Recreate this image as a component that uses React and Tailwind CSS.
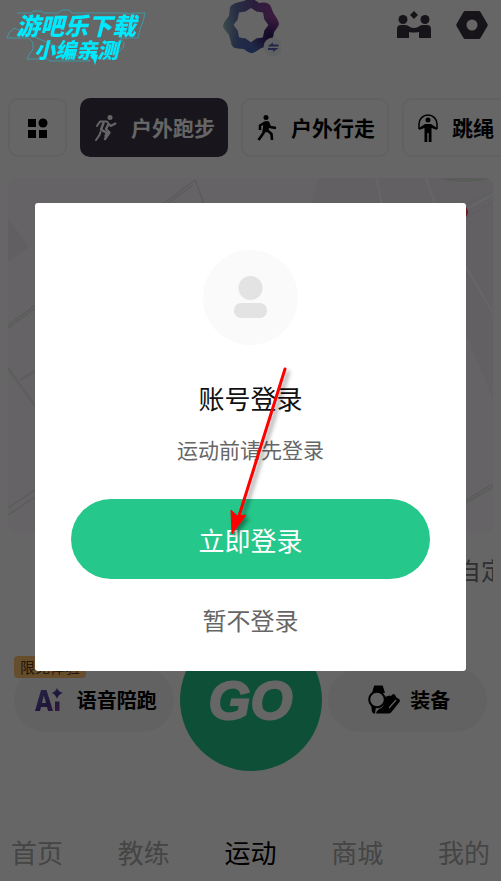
const TABS = [
  { label: '首页' },
  { label: '教练' },
  { label: '运动', active: true },
  { label: '商城' },
  { label: '我的' },
];

function BrandLogo() {
  return (
    <svg viewBox="0 0 60 60" className="size-[60px]" aria-hidden="true">
      <defs>
        <linearGradient id="ring" x1="0" y1="0.5" x2="1" y2="0.4">
          <stop offset="0" stopColor="#94bdbd" />
          <stop offset="0.25" stopColor="#6473ac" />
          <stop offset="0.6" stopColor="#6c4a98" />
          <stop offset="1" stopColor="#9c4298" />
        </linearGradient>
        <radialGradient id="ringBlue" cx="0.5" cy="1" r="0.55">
          <stop offset="0" stopColor="#4567b8" />
          <stop offset="1" stopColor="#4567b8" stopOpacity="0" />
        </radialGradient>
        <radialGradient id="ringNavy" cx="0.82" cy="0.68" r="0.35">
          <stop offset="0" stopColor="#2a1c60" />
          <stop offset="1" stopColor="#2a1c60" stopOpacity="0" />
        </radialGradient>
        <path
          id="ringShape"
          fillRule="evenodd"
          d="M23 3Q30 -2 38 5Q48 3 50 9Q51 12 53 16Q58 23 58 26Q57 29 53 34L51 44Q48 48 40 50Q33 55 31 55Q28 55 23 51L14 50Q10 48 10 44L8 37Q2 30 2 28Q2 25 8 18L9 9Q11 5 23 3ZM30 10L24.500 13.600L18 14.500L16.600 21.500L12.500 27L16.600 32.500L18 39.500L24.500 40.400L30 44.500L35.500 40.400L42 39.500L43.400 32.500L47.500 27L43.400 21.500L42 14.500L35.500 13.600Z"
        />
      </defs>
      <use href="#ringShape" fill="url(#ring)" />
      <use href="#ringShape" fill="url(#ringBlue)" />
      <use href="#ringShape" fill="url(#ringNavy)" />
      <circle cx="52" cy="49" r="9.500" fill="#f1f2f7" />
      <path d="M47 48L52 44.500V46.500H57.500V48.500H47ZM47 50H57.500L52 54V52H47Z" fill="#5a62b8" />
    </svg>
  );
}

function FriendsIcon() {
  return (
    <svg viewBox="0 0 36 28" className="h-7 w-9" fill="#39343f" aria-hidden="true">
      <path d="M18 0L22 4L18 8L14 4Z" />
      <circle cx="7" cy="8.500" r="4.500" />
      <circle cx="29" cy="8.500" r="4.500" />
      <path d="M1 27V18Q1 14 5 14H9Q12 14 14 16Q18 18 22 16Q24 14 27 14H31Q35 14 35 18V27H23V21Q18 22 13 21V27Z" />
    </svg>
  );
}

function SettingsIcon() {
  return (
    <svg viewBox="0 0 32 28" className="h-7 w-8" aria-hidden="true">
      <path
        fillRule="evenodd"
        fill="#39343f"
        d="M9 0H23Q24 0 24.500 1L31.500 13Q32 14 31.500 15L24.500 27Q24 28 23 28H9Q8 28 7.500 27L0.500 15Q0 14 0.500 13L7.500 1Q8 0 9 0ZM16 8.500A5.500 5.500 0 1 0 16 19.500A5.500 5.500 0 1 0 16 8.500Z"
      />
    </svg>
  );
}

function GridIcon() {
  return (
    <svg viewBox="0 0 20 20" className="size-5" aria-hidden="true">
      <path d="M0 1H8V9H0ZM0 12H8V20H0ZM11 12H19V20H11Z" />
      <circle cx="15" cy="5" r="4.500" />
    </svg>
  );
}

function RunIcon() {
  return (
    <svg viewBox="0 0 22 26" className="h-[26px] w-[22px] shrink-0" fill="none" stroke="#fff" strokeWidth="2" strokeLinecap="round" strokeLinejoin="round" aria-hidden="true">
      <circle cx="15" cy="2.500" r="2.500" fill="#fff" stroke="none" />
      <path d="M2 11L5 6.500H12L15.500 11L20.500 8.500" />
      <path d="M8.500 8L6 14.500L12 18L10.500 21" strokeWidth="2.400" />
      <path d="M13 10L11 14L14.500 17.500L10 24" strokeWidth="2.400" />
      <path d="M5.500 17L4.500 20L1 25" />
    </svg>
  );
}

function WalkIcon() {
  return (
    <svg viewBox="0 0 20 26" className="h-[26px] w-5 shrink-0" fill="none" stroke="#000" strokeWidth="2.600" strokeLinejoin="round" aria-hidden="true">
      <circle cx="9" cy="2.500" r="2.500" fill="#000" stroke="none" />
      <path d="M3 15V10.500L8 7.500H11L13 12L19 13" />
      <path d="M8 8L6.500 18L1.500 25" />
      <path d="M11 8L10 15L14.500 19L15 25" />
      <path d="M8 8H11L10 16H7Z" fill="#000" />
    </svg>
  );
}

function RopeIcon() {
  return (
    <svg viewBox="0 0 20 28" className="h-7 w-5 shrink-0" aria-hidden="true">
      <path d="M1 15V10A9 9 0 0 1 19 10V15" fill="none" stroke="#000" strokeWidth="1.500" />
      <circle cx="10" cy="6" r="2.500" />
      <path d="M1 14L7 10H13L19 14V16L13.500 14V28H10.700V19H9.300V28H6.500V14L1 16Z" />
    </svg>
  );
}

function AiIcon() {
  return (
    <svg viewBox="0 0 28 24" className="h-6 w-7 shrink-0" aria-hidden="true">
      <defs>
        <linearGradient id="ai" x1="0" y1="0" x2="1" y2="1">
          <stop offset="0" stopColor="#6465a8" />
          <stop offset="0.600" stopColor="#4f3894" />
          <stop offset="1" stopColor="#8d479f" />
        </linearGradient>
      </defs>
      <path
        fill="url(#ai)"
        fillRule="evenodd"
        d="M6 2H11.500L18 23H13L12 19H6L5 23H0ZM8.800 7.500L7 15H11ZM20 13.500H24.500V23H20ZM22 0Q23.500 4 28 5Q23.500 6 22 11Q20.500 6 16.500 5Q20.500 4 22 0Z"
      />
    </svg>
  );
}

function GearIcon() {
  return (
    <svg viewBox="0 0 32 30" className="h-[30px] w-8 shrink-0" aria-hidden="true">
      <path d="M6 1Q6 0.500 7 0.500H14Q15 0.500 15 1.500L17 8H4ZM3 19L8 22L7 28.500H5.500L4 27Z" />
      <circle cx="9" cy="14.500" r="7.800" fill="#f6f6f6" stroke="#000" strokeWidth="2" />
      <path d="M16.500 12L20 11Q21.500 10 23 11L24.500 9.500Q26 8.500 27 10L28.500 12.500L31 14Q32.500 15 31.500 17L23.500 27Q22.500 28.500 20 28.500H8Q9 24 13.500 23Q17.500 20 16.500 12Z" />
      <path d="M21 23L28 15" stroke="#f6f6f6" strokeWidth="1.200" />
    </svg>
  );
}

function MapPreview() {
  return (
    <div className="mx-2 mt-[21px] h-[354px] overflow-hidden rounded-lg bg-[#fff8ff]">
      <svg viewBox="0 0 485 354" preserveAspectRatio="none" className="size-full" fill="none" aria-hidden="true">
        <path d="M0 40L21 69L0 84Z" fill="#f3edf4" />
        <path d="M310 0H485V354H380L290 80Z" fill="#f5f1f8" />
        <path d="M435 100L485 222V354H420Z" fill="#fff8ff" />
        <path d="M431 0Q455 8 485 0Z" fill="#e2e6e2" />
        <path d="M155 26L187 2L196 26M159 26L185 7M0 147L60 104M0 150L60 107M0 330L60 290M0 337L60 297M455 324L485 306M455 327L485 309" stroke="#dfe6df" strokeWidth="1.500" />
        <path d="M0 190L50 260M12 202L40 186" stroke="#e8ebe8" strokeWidth="3" />
        <path d="M368 0Q374 20 375 40M418 0L435 50L485 135M425 50L485 16" stroke="#fff" strokeWidth="2" />
        <path d="M440 50L485 24M435 37L485 14" stroke="#e6e6e8" strokeWidth="1" />
        <circle cx="453" cy="34" r="7" fill="#fa4456" />
      </svg>
    </div>
  );
}

function SportChip({ icon, label, active }) {
  return (
    <button
      type="button"
      className={`flex h-[59px] w-[148px] shrink-0 items-center justify-center gap-[14px] rounded-[10px] pl-[2px] text-[21px] font-bold ${
        active ? 'bg-[#3c3549] text-white' : 'border-2 border-[#f3f3f3] text-black'
      }`}
    >
      {icon}
      <span>{label}</span>
    </button>
  );
}

function Home() {
  return (
    <div className="flex min-h-screen flex-col overflow-hidden bg-white">
      <header className="grid h-[98px] grid-cols-[1fr_auto_1fr] items-start">
        <div className="col-start-2 -mt-[2px]">
          <BrandLogo />
        </div>
        <div className="flex justify-end gap-6 pt-[11px] pr-[13px]">
          <button type="button" aria-label="好友"><FriendsIcon /></button>
          <button type="button" aria-label="设置"><SettingsIcon /></button>
        </div>
      </header>

      <div className="flex gap-[13px] overflow-hidden pl-2">
        <button type="button" aria-label="全部" className="flex h-[59px] w-[59px] shrink-0 items-center justify-center rounded-[10px] border-2 border-[#f3f3f3]">
          <GridIcon />
        </button>
        <SportChip icon={<RunIcon />} label="户外跑步" active />
        <SportChip icon={<WalkIcon />} label="户外行走" />
        <button type="button" className="flex h-[59px] w-[110px] shrink-0 items-center gap-[14px] rounded-[10px] border-2 border-[#f3f3f3] pl-[14px] text-[21px] font-bold">
          <RopeIcon />
          <span className="shrink-0">跳绳</span>
        </button>
      </div>

      <MapPreview />

      <div className="mx-2 mt-[18px] flex justify-end text-2xl leading-10 text-[#777]">
        <span className="w-9 overflow-hidden whitespace-nowrap">自定</span>
      </div>

      <div className="mt-[39px] flex items-center gap-[6px] px-[14px]">
        <button type="button" className="relative flex h-16 flex-1 items-center justify-center gap-[14px] rounded-full bg-[#f6f6f6] pl-1 text-xl font-bold">
          <span className="absolute -top-3 left-0 rounded-sm bg-[#ffc271] px-[6px] text-[15px] leading-[22px] font-normal text-[#5a3b12]">限免体验</span>
          <AiIcon />
          <span>语音陪跑</span>
        </button>
        <button type="button" className="size-[142px] rounded-full bg-[#25c78b] font-['Liberation_Sans',sans-serif] text-[54px] leading-none font-bold text-white italic [-webkit-text-stroke:2px_#fff]">
          GO
        </button>
        <button type="button" className="flex h-16 flex-1 items-center justify-center gap-[10px] rounded-full bg-[#f6f6f6] pl-1 text-xl font-bold">
          <GearIcon />
          <span>装备</span>
        </button>
      </div>

      <nav className="mt-auto flex justify-between px-[11px] pb-[9px] text-[26px] leading-10">
        {TABS.map((tab) => (
          <a key={tab.label} href="#" className={tab.active ? 'text-black' : 'text-[#acacac]'}>
            {tab.label}
          </a>
        ))}
      </nav>
    </div>
  );
}

function Arrow() {
  return (
    <svg viewBox="0 0 80 180" className="pointer-events-none absolute top-[162px] left-[185px] h-[180px] w-20 drop-shadow-[3px_3px_2px_rgba(0,0,0,0.4)]" aria-hidden="true">
      <path d="M65 4L19 151" stroke="#f00" strokeWidth="3" strokeLinecap="round" />
      <path d="M12 169L11 145L17 151L26 150Z" fill="#f00" stroke="#f00" />
    </svg>
  );
}

function LoginDialog() {
  return (
    <div className="fixed inset-0 flex items-center justify-center bg-black/60 px-[35px] pb-[7px]">
      <div role="dialog" aria-label="账号登录" className="relative flex w-full flex-col items-center rounded-[3px] bg-white px-9 pt-[47px] pb-[33px]">
        <svg viewBox="0 0 95 95" className="size-[95px]" aria-hidden="true">
          <circle cx="47.500" cy="47.500" r="47.500" fill="#fafafa" />
          <circle cx="47.500" cy="38" r="12" fill="#e3e3e3" />
          <rect x="31" y="53" width="33" height="15" rx="7" fill="#e3e3e3" />
        </svg>
        <h2 className="mt-[35px] text-[26px] leading-9 text-[#111]">账号登录</h2>
        <p className="mt-[19px] text-[21px] leading-7 text-[#666]">运动前请先登录</p>
        <button type="button" className="mt-9 h-20 w-full rounded-full bg-[#25c78b] text-[26px] text-white">
          立即登录
        </button>
        <button type="button" className="mt-[23px] text-2xl leading-9 text-[#666]">暂不登录</button>
        <Arrow />
      </div>
    </div>
  );
}

function Watermark() {
  return (
    <div className="pointer-events-none fixed top-0 left-0 h-[70px] w-[150px] font-black text-[#00eaff] italic">
      <svg viewBox="0 0 150 70" className="absolute inset-0 size-full" fill="none" stroke="#3f98a5" aria-hidden="true">
        <path d="M17 13H31L34 11H41L44 13H58L62 10H69L72 13H126L130 14L132 13H145L143 22L140 29L138 38H120L124 43L123 48L119 51L117 59H99M90 61H50L47 59H27L30 53L33 50V43L29 38H7L9 33L14 28Z" />
        <path d="M91 52L95 65L98 55Z" fill="#00eaff" stroke="none" />
      </svg>
      <div className="relative pt-[11px] pl-4 text-2xl leading-[27px] whitespace-nowrap">游吧乐下载</div>
      <div className="relative pl-[34px] text-[21px] leading-[22px] whitespace-nowrap">小编亲测</div>
    </div>
  );
}

export default function App() {
  return (
    <div className="font-['Noto_Sans_CJK_SC',sans-serif]">
      <Home />
      <LoginDialog />
      <Watermark />
    </div>
  );
}
